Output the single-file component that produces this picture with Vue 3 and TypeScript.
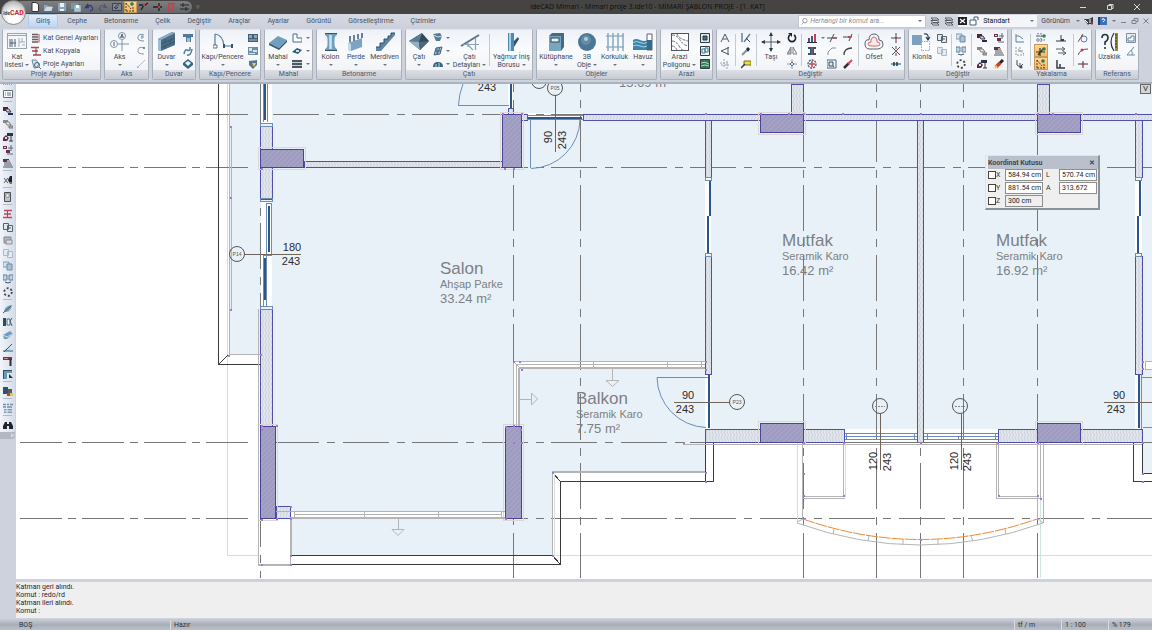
<script setup lang="ts">
import { ref } from 'vue'

type Column = {
  kind: 'big' | 'small' | 'drops' | 'sep' | 'list'
  w: number
  icon?: string
  label?: string[]
  drop?: boolean
  items?: string[]
  texts?: string[]
}
type Group = { title: string; cols: Column[] }

const big = (w: number, icon: string, label: string[], drop = true): Column => ({ kind: 'big', w, icon, label, drop })
const small = (w: number, ...items: string[]): Column => ({ kind: 'small', w, items })
const sep = (w = 4): Column => ({ kind: 'sep', w })
const drops = (w: number, n = 3): Column => ({ kind: 'drops', w, items: Array(n).fill('v') })

const dark = '#2c3c4c'

/* Large glyphs use a 20x20 box. */
const bigIcons: Record<string, string> = {
  floors: `<rect x=".5" y="1.5" width="19" height="15" fill="#f4f6f8" stroke="#9aa4ae"/><path d="M.5 3.5h19" stroke="#9aa4ae"/><path d="M3 7v8M5 7v8M8 7v8M3 11h6" stroke="#4f6376" fill="none"/><path d="M12 6v9M12 10h6M15 6v4M15 13h3" stroke="#9dabb7" fill="none"/>`,
  axes: `<g fill="none" stroke="#7e97ab"><circle cx="12" cy="4" r="3.5"/><circle cx="4" cy="12" r="3.5"/><path d="M12 8v11M8 12h11"/></g><path d="M10.5 6l1.5-4 1.5 4M11 5h2M4 10v4" fill="none" stroke="${dark}" stroke-width=".8"/>`,
  wall: `<path d="M1 7L15 0l3 1v12L4 19l-3-1z" fill="#4c6c84"/><path d="M1 7l3 1v11l-3-1z" fill="#9dbdd1"/><path d="M1 7L15 0l3 1L4 8z" fill="#89adc4"/><path d="M4 12l14-6M4 15.500l14-6M8 7v4M13 8v4M8 13v4" stroke="#34536b" stroke-width=".8"/>`,
  door: `<path d="M2 15V2M2 2q8 1 9 12" fill="none" stroke="#5a7c96" stroke-width="1.2"/><path d="M0 13h4v3H0z" fill="#fff" stroke="#37566e" stroke-width=".8"/><path d="M10 12h2v4h-2zM18 12h2v4h-2z" fill="#37566e"/><path d="M12 14h6" stroke="#9db8ca" stroke-width="2"/>`,
  slab: `<path d="M1 11L10 4l9 4-8 8z" fill="#6f9fbe"/><path d="M1 11l10 5v2L1 13zM11 16l8-8v2l-8 8z" fill="#33597a"/>`,
  column: `<path d="M4 1h12v2q-2.500 1-2.500 4v5q0 4 2.500 5v2H4v-2q2.500-1 2.500-5V7Q6.500 4 4 3z" fill="#6f9fba"/><path d="M9.500 3v14" stroke="#cbe6f2" stroke-width="2.500"/><path d="M4 1.500h12M4 18.500h12" stroke="#33536b" stroke-width="1.2"/>`,
  curtain: `<path d="M2 11l14-5v9L5 19l-3-1z" fill="#7ba4c3"/><path d="M2 11l3 1v7l-3-1z" fill="#c3dbea"/><path d="M4 10V4M8 9V3M12 7V2M16 6V1" stroke="#3c5b77" stroke-width="1.5"/>`,
  stairs: `<path d="M1 19v-4h4v-4h4V7h4V4h3V1h4v2L6 19z" fill="#5f86a2"/><path d="M1 15h4v-4h4V7h4V4h3V1h4" stroke="#294d68" fill="none"/>`,
  roof: `<path d="M0 9L13 1l7 8-9 9z" fill="#33495a"/><path d="M0 9l13-8-3 9z" fill="#5e7c91"/><path d="M0 9l10 1 1 8z" fill="#93b0c2"/><path d="M10 10l10-1-9 9z" fill="#4b687c"/>`,
  truss: `<path d="M1 14L19 3" stroke="#56748a" stroke-width="2" fill="none"/><path d="M3 12.500h16M8 10v5M15.500 6v12M8 13l5 5" fill="none" stroke="#8aa2b4" stroke-width="1.2"/>`,
  gutter: `<path d="M6 1h6v18H6z" fill="#4e8ab0"/><path d="M8 1v18" stroke="#a8d0e8" stroke-width="2"/><path d="M12 9l4-4 1 2-5 8" fill="#2f536e"/>`,
  library: `<path d="M3 4l3-3h12v14l-3 4H3z" fill="#446b85"/><rect x="3" y="4" width="12" height="15" fill="#7ba5bf"/><rect x="5" y="6" width="8" height="4" fill="#e7f4fa" stroke="#27485e"/>`,
  sphere: `<circle cx="10" cy="10" r="9" fill="#4a7797"/><circle cx="9" cy="8" r="5" fill="#668ba7"/><circle cx="9" cy="7" r="2" fill="#b2cddc"/>`,
  railing: `<path d="M1 4h18M1 15h18" stroke="#6f93ad"/><path d="M3 1v18M8 1v18M13 1v18M18 1v18" stroke="#88a9bf" stroke-width="1.5"/>`,
  pool: `<path d="M0 8q3-2 7 0t8 0v10H0z" fill="#3c84aa"/><path d="M14 2h5v16h-5z" fill="#fff" stroke="#59656e"/><path d="M14 8h5v10h-5z" fill="#2f6c90"/><path d="M0 10.500q3-2 7 0t7 0M0 14q3-2 7 0t7 0" stroke="#a8d5e8" fill="none"/>`,
  terrain: `<rect x="1.5" y="1.5" width="17" height="17" fill="#fff" stroke="#4b555e"/><path d="M2 3q5 0 8 5t8 6M7 2q2 5 11 7M2 9q4 0 7 5t6 4M2 14q3 0 5 4" fill="none" stroke="#69757e" stroke-dasharray="3 1"/>`,
  move: `<path d="M10 1v18M1 10h18" stroke="#4b5966"/><path d="M8 4l2-4 2 4zM8 16l2 4 2-4zM4 8l-4 2 4 2zM16 8l4 2-4 2z" fill="#2d3b47"/>`,
  offset: `<path d="M6 17q-5 0-5-5t4-4q0-6 5-6t5 6q4 0 4 4t-5 5z" fill="none" stroke="#58636e"/><path d="M7 14q-3 0-3-2t3-2V8q1-3 3-3t3 3v2q3 0 3 2t-3 2z" fill="#fae8e8" stroke="#cd6d70"/>`,
  clone: `<rect x="0" y="3" width="10" height="10" fill="#7ba0c0"/><path d="M9.500 9.500h8v9h-8z" fill="#fff" stroke="#9ba6b1" stroke-dasharray="1.5 1"/><path d="M12 2q5-1 4 5M14 5l2 3 2-3" fill="none" stroke="#263c56" stroke-width="1.2"/>`,
  distance: `<path d="M2 6q0-3.500 3-3.500t3 3-3 4.500v3M5 15v2" stroke="#26323e" stroke-width="1.600" fill="none"/><path d="M14 1q-6 9 0 18" stroke="#26323e" stroke-width="1.2" fill="none"/><path d="M15 1h3v18h-3z" fill="#938c32"/><path d="M15 3h2M15 6h2M15 9h2M15 12h2M15 15h2" stroke="#3b3b1e"/>`
}

/* Small glyphs use a 10x10 box. */
const icons: Record<string, string> = {
  levels: `<path d="M1 1.5h6M1 4h6M1 6.5h6M1 9h6" stroke="#6a5a62" stroke-width="1.4"/><path d="M8 1v8.500" stroke="#b04850"/>`,
  floorcopy: `<path d="M0 1.5h8M2 9h8M1 5h6" stroke="#b2424c" fill="none" stroke-width="1.3"/><path d="M5 2v7" stroke="#6f4550"/>`,
  settings: `<path d="M1 1h4l3 4-3 4H3z" fill="#dbe6ee" stroke="#6f8aa0"/><circle cx="6" cy="6" r="2.5" fill="none" stroke="#406781"/><path d="M8 8l2 2" stroke="#4e6d82"/>`,
  arc1: `<path d="M8 2Q3 0 2 4t6 4M5 4h3M6 2v4" stroke="#7e93a4" fill="none"/>`,
  arc2: `<path d="M8 2Q3 0 2 4t6 4" stroke="#8296a6" fill="none"/><circle cx="8" cy="2" r="1" fill="#556b7d"/>`,
  dots: `<path d="M1 9l8-8" stroke="#9ba6b0" stroke-dasharray="2 1"/><circle cx="2" cy="8" r="1" fill="#b1bac2"/>`,
  niche: `<path d="M0 1h10v3H8v5H3V4H0z" fill="#4d7c9c"/><path d="M4 5h3v4H4z" fill="#a4bccb"/>`,
  curve: `<path d="M1 8q1-5 3-4t3 0V1M4 9q4 1 5-6" fill="none" stroke="#5a7f9b" stroke-width="1.5"/>`,
  diamond: `<path d="M5 0l5 4v2L5 10 0 6V4z" fill="#376681"/><path d="M5 2l3 2-3 3-3-3z" fill="#e4f3fb"/>`,
  window: `<path d="M0 1h10v8H0z" fill="#435f76"/><path d="M1 2h3v3H1zM6 2h3v3H6z" fill="#89a9bd"/><path d="M1 7h8" stroke="#b0c6d3"/>`,
  window2: `<path d="M0 1h10v8H0z" fill="#6d8ea5"/><path d="M1 2h3v3H1zM5 4h4v2H5zM1 7h6v1H1z" fill="#d5e3ec"/>`,
  shield: `<path d="M1 2l8-1v5L5 10 1 6z" fill="#547790"/><path d="M4 4h4L6 8z" fill="#edcd59"/>`,
  poly: `<path d="M1 1h4v4h5v4H1z" fill="#f9fbfc" stroke="#536f84"/>`,
  slabS: `<path d="M0 6l5-4 5 2-4 4z" fill="#345b76"/><path d="M4 4h3v2H4z" fill="#c6dfed"/>`,
  rows: `<path d="M0 1h10v8H0z" fill="#4c5962"/><path d="M0 3.5h10M0 6.5h10" stroke="#c9d0d5"/>`,
  roofS: `<path d="M0 1l7-1 2 3-2 5H3z" fill="#537993"/><path d="M0 2l5 2 4-1" stroke="#d0e0ea" fill="none"/>`,
  roofMesh: `<path d="M1 9l2-7 6-1-2 7zM2 5h6M4 2v7M7 1L4 9" fill="#a8c1d0" stroke="#42647c"/>`,
  dome: `<path d="M0 8q0-5 5-5t5 5z" fill="#3a647f"/><path d="M3 8V5M6 8V4" stroke="#b8d4e4"/>`,
  siteA: `<path d="M.5.5h9v9h-9z" fill="#dfe9ec" stroke="#2f3d42"/><path d="M3 3h4v4H3z" fill="#426a7d" stroke="#2a3d46"/>`,
  siteB: `<path d="M.5.5h9v9h-9z" fill="#eef4f6" stroke="#2f3d42"/><path d="M2 3h3v4H2zM5 2h3v4H5z" fill="none" stroke="#3e7d8a"/>`,
  siteC: `<path d="M.5.5h9v9h-9z" fill="#347a58" stroke="#2f3d42"/><path d="M1 4q4-2 8 1M1 7q4-2 8 0" stroke="#b2debd" fill="none"/>`,
  caret: `<path d="M1 9l4-8 4 8M3 6h4" stroke="#4c5a67" fill="none"/>`,
  tri: `<path d="M8 1v8M9 1.5L1 5l8 3.500" stroke="#4c5863" fill="none"/>`,
  cross: `<path d="M0 4h8M4 0v9M1 6h9M7 2v8" stroke="#97a5b2" fill="none" stroke-dasharray="2 1"/>`,
  split: `<path d="M1 0v9M3 9l6-8" stroke="#6285a0" stroke-width="1.5"/><path d="M5 5l4 4" stroke="#2c3e4c"/>`,
  dropper: `<path d="M1 9l5-5" stroke="#83939f" stroke-width="2"/><path d="M5 3l2-2 2 2-2 3z" fill="#22303c"/>`,
  tag: `<path d="M3 2h7v4H3z" fill="#eae22a" stroke="#777021"/><path d="M0 9l4-4" stroke="#2a3640" stroke-width="1.5"/>`,
  rotate: `<path d="M7 2A3.600 3.600 0 1 1 3 2" fill="none" stroke="#1e252b" stroke-width="1.600"/><path d="M1 0h4v4z" fill="#1e252b"/>`,
  mirror: `<path d="M4 1v7H0z" fill="#c9b1b3" stroke="#788089"/><path d="M6 1v7h4z" fill="#f1f1f1" stroke="#788089"/>`,
  plus: `<path d="M5 0v10M0 5h10" stroke="#8298ab"/><path d="M5 3l2 2-2 2-2-2z" fill="#dce4eb" stroke="#60788c"/>`,
  bars: `<path d="M1 9V5h2v4zM4 9V3h2v6z" fill="#44558a"/><path d="M7 9V1h2v8z" fill="#c5404a"/><path d="M0 9.5h10" stroke="#282f3c"/>`,
  align: `<path d="M1 1h8v2H1zM1 7h8v2H1zM3 3h4v4H3z" fill="#2a5670"/><path d="M5 1v8" stroke="#d04a54" stroke-width="1"/>`,
  target: `<circle cx="5" cy="5" r="4" fill="none" stroke="#425d78" stroke-width="1.300" stroke-dasharray="2 1"/><path d="M5 2v6M2 5h6" stroke="#d2444e" stroke-width="1.5"/>`,
  trim: `<path d="M0 5h10M3 9l4-8" stroke="#404954"/><path d="M6 5h4" stroke="#bc4852" stroke-width="1.5"/>`,
  extend: `<path d="M0 4h9M9 1L6 8" stroke="#404954"/><path d="M5 4h3" stroke="#bc4852" stroke-width="2"/>`,
  fillet: `<path d="M1 9V6l4-4h4" fill="none" stroke="#848f98"/>`,
  fillet2: `<path d="M1 9q0-7 8-7" fill="none" stroke="#3d464e" stroke-width="1.3"/>`,
  scale: `<path d="M0 1h9v8H0zM3 4l4 4" fill="none" stroke="#486480"/><path d="M2 3h4v4H2z" fill="#dde8f0" stroke="#344f66"/>`,
  brush: `<path d="M1 9l5-5" stroke="#3d2c34" stroke-width="2.5"/><path d="M5 5l4-4" stroke="#ca4c58" stroke-width="2"/>`,
  snapX: `<path d="M0 5h10M5 0v10" stroke="#3f4852"/><path d="M4 4h2v2H4z" fill="#c13c48"/>`,
  explode: `<path d="M1 1l3 3M1 9l3-3M9 1L6 4M9 9L6 6M5 0v3M5 7v3" stroke="#454e58" fill="none"/><circle cx="5" cy="5" r="1.200" fill="#be3b45"/>`,
  join: `<path d="M0 5h10" stroke="#4a8fa6" stroke-width="1.5"/><path d="M3 3v4M6 3v4" stroke="#263943" stroke-width="1.5"/>`,
  copy: `<path d="M.5 1.500h5v6h-5zM4.500 3.500h5v6h-5z" fill="#e2eaf0" stroke="#56626d"/><path d="M6 6h2" stroke="#56626d"/>`,
  copyOff: `<path d="M.5 1.500h5v6h-5zM4.500 3.500h5v6h-5z" fill="#e3ebf1" stroke="#a9bac9"/>`,
  group: `<path d="M0 1h6v5H0z" fill="#d4e1ec" stroke="#7e9bb4"/><path d="M4 3h5v6H4z" fill="#a9c1d5" stroke="#6f8ca6"/>`,
  group2: `<path d="M0 1h4v5H0zM6 1h4v5H6z" fill="#c1d4e4" stroke="#627f9c"/><path d="M2 8q3 2 6 0" stroke="#3d5a76" fill="none"/>`,
  ring: `<circle cx="5" cy="5" r="3.800" fill="none" stroke="#3c4248" stroke-width="1.800" stroke-dasharray="2 2"/>`,
  stackA: `<path d="M0 1h5v4H0z" fill="#4e2433"/><path d="M2 3h4l2 3H4z" fill="#d9ced6" stroke="#3c3242"/><path d="M5 7h5v2H5z" fill="#232c54"/>`,
  stackB: `<path d="M0 1h5v3H0z" fill="#8b8b8b"/><path d="M2 3h4l2 3H4z" fill="#eee" stroke="#777"/><path d="M6 7h4v2H6z" fill="#b5b9bd" stroke="#777"/>`,
  stackC: `<path d="M4 1h6v3H4z" fill="#2b3448"/><path d="M0 6l3-3 3 3-2 3H0z" fill="#5a3041"/><path d="M2 5h2v2H2z" fill="#e5dde2"/><path d="M8 3v6M6 9h4" stroke="#2e3644"/>`,
  stackD: `<path d="M0 1h4v3H0zM3 5h4v3H3z" fill="#693344"/><path d="M1 2h2v1H1z" fill="#e5dde2"/><path d="M8 0v6M5 3h5" stroke="#4d6f86"/><path d="M4 9h6" stroke="#4d6f86"/>`,
  stackE: `<path d="M0 1h6v3H0z" fill="#4d3b60"/><path d="M1 5h7M1 7h8M0 9h10" stroke="#4c5566"/><path d="M4 2h3v2H4z" fill="#c9a27a"/>`,
  eraser: `<path d="M2 8l4-4" stroke="#cd3a2e" stroke-width="3.500"/><path d="M6 4l3-3" stroke="#232323" stroke-width="3"/><path d="M1 9l2-2" stroke="#efd03c" stroke-width="2.500"/>`,
  ucs: `<path d="M1 1v8h8M1 3h3l4 3" stroke="#5d7f9c" fill="none"/>`,
  ucs2: `<path d="M1 1v8h8M3 3l6 5M5 1v6M3 5h5" stroke="#8a9aa9" fill="none" stroke-dasharray="2 1"/>`,
  hook: `<path d="M2 1v5l3 2 3-3M5 8V4" stroke="#414c58" fill="none"/><circle cx="6" cy="8" r="1.5" fill="#414c58"/>`,
  grid: `<path d="M2 0v10M5 0v10M0 3h9M0 7h9" stroke="#55616c" stroke-dasharray="1.5 1"/><circle cx="8" cy="3" r="1.800" fill="#2e865c"/>`,
  'snap*': `<path d="M0 6h9M4 2v8M2 9l5-6" stroke="#263a34" stroke-width="1.2"/><circle cx="8" cy="3" r="1.800" fill="#2a7e4e"/>`,
  'snapg*': `<path d="M1 1v8M8 5v4M1 1l5 6M1 9h8" stroke="#4a4432" stroke-dasharray="2 1"/><circle cx="7" cy="2" r="1.800" fill="#2a7e4e"/>`,
  perp: `<path d="M0 8h10M5 2v6" stroke="#333d47"/><path d="M5 6h3v2H5z" fill="#333d47"/>`,
  para: `<path d="M0 3h8M2 7h8M6 1l3 2-3 2M7 5l3 2-3 2" stroke="#56616c" fill="none"/>`,
  corner: `<path d="M1 1v8h8M4 5v4" stroke="#333d47" fill="none" stroke-width="1.5"/>`,
  tangent: `<circle cx="6" cy="6" r="3" fill="none" stroke="#597c9a"/><path d="M0 9l5-8" stroke="#56616c"/><circle cx="4" cy="3" r="1" fill="#d13b3b"/>`,
  near: `<path d="M0 9q2-6 10-6" stroke="#454f59" fill="none"/><circle cx="4" cy="4" r="1.5" fill="#d13b3b"/>`,
  inter: `<path d="M0 5h10M5 2v7" stroke="#333d47"/><circle cx="5" cy="5" r="1.300" fill="#d13b3b"/>`,
  area: `<path d="M.5.5h9v9h-9z" fill="#e7eef5" stroke="#7990a6"/><path d="M2 8h6V3H5v2H2z" fill="#fff" stroke="#6b849b"/>`,
  angle: `<path d="M9 9H1l7-8M5 4q2 2 1 5" stroke="#6f8ba6" fill="none"/>`,
  list: `<path d="M.5 1.5h9v7h-9z" fill="#fff" stroke="#66707a"/><path d="M2 4h1M4 4h4M2 6h1M4 6h4" stroke="#66707a"/>`,
  fence: `<path d="M1 3l4 5M5 3L1 8" stroke="#555d64"/><path d="M7 1h2v8H7L5 5z" fill="#1f2225"/><path d="M6 8h3" stroke="#e3c84b"/>`,
  calc: `<path d="M1.5.5h6v9h-6z" fill="#bfc4c9" stroke="#4a4e53"/><path d="M3 2h3v3H3z" fill="#fff" stroke="#4a4e53" stroke-width=".5"/>`,
  redz: `<path d="M1 1.5h8M1 5h7M0 8.5h9" stroke="#c04b55" fill="none" stroke-width="1.3"/><path d="M4.500 2v6" stroke="#7c5a63"/>`,
  db: `<path d="M1 2h7v6H1z" fill="#b5b8bb" stroke="#85888c"/><path d="M3 5h6v4H3z" fill="#d9dbdd" stroke="#8b8e92"/>`,
  leaf: `<path d="M1 8q0-6 8-7-1 8-8 7z" fill="#7fa3b8"/><path d="M0 9l8-7" stroke="#395c72"/>`,
  panel: `<path d="M0 1h3v8H0z" fill="#2b4d69"/><path d="M4 2h3v6H4z" fill="#f4f6f8" stroke="#516a80"/><path d="M9 1L7 4l2 5" stroke="#41586c" fill="none"/>`,
  block: `<path d="M0 5l7-4 3 3-6 5H1z" fill="#6d9dbd"/><path d="M0 5l4 2 6-3" stroke="#c9e2f0" fill="none"/>`,
  slash: `<path d="M3 5h5v3H1z" fill="#c5dcea"/><path d="M0 8h10M1 9l8-8" stroke="#3c5b70"/>`,
  hammer: `<path d="M0 1h9v3H0z" fill="#6d3a44"/><path d="M7.500 3v7" stroke="#2d2d33" stroke-width="2"/><path d="M1 2h4v1H1z" fill="#c9888f"/>`,
  lshape: `<path d="M0 1h9v3H4v6H0z" fill="#6d97b2"/><path d="M0 1h9v1H1v8H0z" fill="#2f536b"/><path d="M6 5l4 4H6z" fill="#22343f"/>`,
  cubes: `<path d="M0 1h5v7H0z" fill="#2f536b"/><path d="M5 3h4v4H5z" fill="#565b60"/><path d="M4 7h3v3H4z" fill="#ce3d32"/><path d="M7 7h3v3H7z" fill="#e5c43b"/>`,
  auto: `<path d="M0 1.5h3M4 1.5h2M7 1.5h3M0 4h3M4 4h5" stroke="#6c93ad" stroke-width="1.5"/><path d="M1 6h8v4H1z" fill="#7a9bb0"/><path d="M1 8h8M4 6v4" stroke="#e7f0f5"/>`,
  binoc: `<path d="M0 9V6l2-4h2v7zM10 9V6L8 2H6v7z" fill="#1f252b"/><path d="M4 4h2v2H4z" fill="#1f252b"/>`,
  newf: `<path d="M2 .5h4l2.500 2v7H2z" fill="#fff" stroke="#333"/>`,
  open: `<path d="M1 9V3h3l1 1h4v5z" fill="#8ea6b8"/><path d="M1 9l2-4h7L8 9z" fill="#c9dbe6"/>`,
  save: `<path d="M1 1h8v8H1z" fill="#86a6bd"/><path d="M3 1h4v4H3zM3 7h4v2H3z" fill="#e8f1f6"/>`,
  saveAll: `<path d="M0 1h7v6H0z" fill="#7797ae"/><path d="M3 3h7v7H3z" fill="#a9c4d5" stroke="#577891" stroke-width=".5"/><path d="M5 3h3v3H5z" fill="#fff"/>`,
  undo: `<path d="M2 5q4-3 6 0t-2 4M4 2L1.500 5.500H5" fill="none" stroke="#2c3a8a" stroke-width="1.300"/>`,
  redo: `<path d="M8 5Q4 2 2 5t2 4M6 2l2.500 3.500H5" fill="none" stroke="#4a5482" stroke-width="1.100"/>`,
  plot: `<path d="M.5 1.500h9v7h-9z" fill="#7d868e" stroke="#3d474f"/><path d="M7 3Q3 3 4 6M2 5l2 2 2-2" stroke="#2f3a5c" fill="none"/>`,
  ortho: `<path d="M0 3h6l3-2M5 3L2 8" stroke="#1f2226" stroke-width="1.3" fill="none"/><path d="M4 2h2v2H4z" fill="#ca3a3e"/>`,
  nearD: `<path d="M0 5h9M6 1v8" stroke="#1f2226" stroke-width="1.3"/><path d="M5 4h2v2H5z" fill="#ca3a3e"/>`,
  redp: `<path d="M3 9V1.500h6M7 9V1.500M1 7l2 2 2-2" stroke="#d13a3c" fill="none" stroke-width="1.300"/>`,
  two: `<path d="M0 3h9M0 7h9" stroke="#22262a" stroke-width="1.2"/><path d="M3 1v4M6 5v4" stroke="#22262a"/>`,
  layers: `<path d="M1 2h6l2 2H3zM1 4.500h6l2 2H3zM1 7h6l2 2H3z" fill="#eceff2" stroke="#3d434a" stroke-width=".8"/>`,
  boxx: `<path d="M0 1h9v8H0z" fill="#1e2226"/><path d="M2 3l5 4M7 3L2 7" stroke="#fff" stroke-width="1.3"/>`,
  lock: `<path d="M1 4h6v5H1z" fill="#fff" stroke="#43607c"/><path d="M5 4V1h4v3" fill="none" stroke="#43607c"/>`,
  book: `<path d="M1 1h8v8H1z" fill="#3c70b8"/><path d="M1 1v8" stroke="#1e4177" stroke-width="2"/><path d="M4 4q0-2 2-1t-1 3" stroke="#fff" fill="none"/>`,
  paint: `<path d="M0 3h5l4-2v7H5L4 9z" fill="#3a3d42"/><path d="M1 4l3 3M6 3v4" stroke="#fff"/><path d="M8 6v3" stroke="#c43a3a"/>`
}

const groups: Group[] = [
  {
    title: 'Proje Ayarları',
    cols: [
      big(28, 'floors', ['Kat', 'listesi']),
      { kind: 'list', w: 69, items: ['levels', 'floorcopy', 'settings'], texts: ['Kat Genel Ayarları', 'Kat Kopyala', 'Proje Ayarları'] }
    ]
  },
  { title: 'Aks', cols: [big(29, 'axes', ['Aks']), small(14, 'arc1', 'arc2', 'dots')] },
  { title: 'Duvar', cols: [big(27, 'wall', ['Duvar']), small(15, 'niche', 'curve', 'diamond')] },
  { title: 'Kapı/Pencere', cols: [big(45, 'door', ['Kapı/Pencere']), small(15, 'window', 'window2', 'shield')] },
  { title: 'Mahal', cols: [big(26, 'slab', ['Mahal']), small(12, 'poly', 'slabS', 'rows'), drops(9)] },
  { title: 'Betonarme', cols: [big(27, 'column', ['Kolon']), big(24, 'curtain', ['Perde']), big(33, 'stairs', ['Merdiven'])] },
  {
    title: 'Çatı',
    cols: [big(26, 'roof', ['Çatı']), small(12, 'roofS', 'roofMesh', 'dome'), drops(8), big(35, 'truss', ['Çatı', 'Detayları']), sep(), big(41, 'gutter', ['Yağmur İniş', 'Borusu'])]
  },
  {
    title: 'Objeler',
    cols: [big(38, 'library', ['Kütüphane']), big(24, 'sphere', ['3B', 'Obje']), big(31, 'railing', ['Korkuluk']), big(26, 'pool', ['Havuz'])]
  },
  { title: 'Arazi', cols: [big(37, 'terrain', ['Arazi', 'Poligonu']), small(14, 'siteA', 'siteB', 'siteC')] },
  {
    title: 'Değiştir',
    cols: [
      small(16, 'caret', 'tri', 'cross'), sep(), small(17, 'split', 'dropper', 'tag'), sep(),
      big(26, 'move', ['Taşı'], false), small(15, 'rotate', 'mirror', 'plus'), sep(),
      small(17, 'bars', 'align', 'target'), drops(5, 1), small(14, 'trim', 'fillet', 'scale'), small(17, 'extend', 'fillet2', 'brush'), sep(),
      big(28, 'offset', ['Ofset'], false), small(16, 'snapX', 'explode', 'join')
    ]
  },
  {
    title: 'Değiştir',
    cols: [
      big(26, 'clone', ['Klonla'], false), small(14, 'copy', 'copyOff'), sep(), small(16, 'group', 'group2', 'ring'), sep(),
      small(18, 'stackA', 'stackB', 'stackC'), small(16, 'stackD', 'stackE', 'eraser')
    ]
  },
  {
    title: 'Yakalama',
    cols: [small(16, 'ucs', 'ucs2', 'hook'), sep(), small(18, 'grid', 'snap*', 'snapg*'), small(21, 'perp', 'para', 'corner'), sep(), small(16, 'tangent', 'near', 'inter')]
  },
  { title: 'Referans', cols: [big(27, 'distance', ['Uzaklık'], false), small(15, 'area', 'angle')] }
]

const tabs = ['Giriş', 'Cephe', 'Betonarme', 'Çelik', 'Değiştir', 'Araçlar', 'Ayarlar', 'Görüntü', 'Görselleştirme', 'Çizimler']
const activeTab = ref('Giriş')
const quick = ['newf', 'open', 'save', 'saveAll', 'undo', 'redo', 'plot', 'snapg*', 'ortho', 'nearD', 'redp', 'two']
const tools: string[][] = [
  ['list'],
  ['stackA', 'stackB', 'stackC', 'stackD', 'stackE'],
  ['fence'],
  ['calc'],
  ['redz', 'copy', 'db', 'copyOff', 'group', 'group2', 'ring'],
  ['leaf', 'panel', 'block', 'slash', 'hammer', 'lshape'],
  ['cubes'],
  ['auto'],
  ['binoc']
]
const log = ['Katman geri alındı.', 'Komut : redo/rd', 'Katman ileri alındı.', 'Komut :']

const rooms = [
  { x: 440, y: 274, name: 'Salon', floor: 'Ahşap Parke', area: '33.24 m²' },
  { x: 782, y: 246, name: 'Mutfak', floor: 'Seramik Karo', area: '16.42 m²' },
  { x: 996, y: 246, name: 'Mutfak', floor: 'Seramik Karo', area: '16.92 m²' },
  { x: 576, y: 404, name: 'Balkon', floor: 'Seramik Karo', area: '7.75 m²' }
]
/* [x, y, width, height] */
const walls = [
  [260, 126, 12, 23], [260, 167, 12, 32], [260, 309, 12, 117], [304, 161, 198, 6], [521, 114, 6, 6], [508, 108, 5, 6],
  [583, 114, 569, 6], [705, 120, 6, 57], [705, 256, 6, 118], [791, 84, 12, 30], [1037, 84, 12, 30], [917, 120, 6, 322],
  [1135, 120, 7, 57], [1135, 256, 7, 118], [705, 429, 55, 13], [803, 429, 41, 13], [998, 429, 39, 13], [1080, 429, 62, 13], [276, 506, 14, 12]
]
const pillars = [
  [260, 149, 43, 18], [502, 114, 19, 53], [760, 114, 43, 18], [1037, 114, 43, 18],
  [260, 426, 15, 92], [505, 426, 16, 92], [760, 423, 43, 19], [1037, 423, 43, 19]
]
const nodes = [
  [230, 126], [230, 197], [230, 309], [228, 355], [260, 354], [261, 168], [502, 113], [521, 113], [504, 168], [513, 168],
  [705, 113], [760, 113], [788, 113], [803, 113], [842, 113], [920, 113], [1037, 113], [1052, 113], [1135, 113],
  [513, 361], [519, 361], [521, 369], [705, 361], [705, 369], [261, 425], [261, 429], [276, 425], [505, 426], [513, 425], [520, 429], [513, 442], [521, 442],
  [290, 506], [290, 518], [276, 518], [261, 519], [290, 555], [290, 564], [261, 564], [505, 518], [552, 472], [552, 555], [683, 442], [705, 472], [705, 481],
  [803, 442], [803, 473], [803, 495], [843, 442], [843, 495], [803, 518], [920, 539], [920, 442], [997, 442], [998, 495], [1037, 495], [1040, 498], [1037, 518], [1037, 442],
  [1142, 361], [1142, 368], [1142, 442], [1142, 473], [1142, 481]
]
const columnsX = [513.5, 580.5, 803.5, 876.5, 920.5, 963.5, 1037.5]
const rowsY = [114.5, 167.5, 442.5, 518.5]
const tags = [
  { x: 237, y: 254, t: 'P14' }, { x: 555, y: 88, t: 'P05' }, { x: 539, y: 81, t: '' }, { x: 737, y: 402, t: 'P23' },
  { x: 880, y: 406, t: '' }, { x: 960, y: 406, t: '' }
]
const dims = [
  { x: 487, y: 91, t: '243', r: 0 }, { x: 292, y: 251, t: '180', r: 0 }, { x: 291, y: 265, t: '243', r: 0 },
  { x: 688, y: 399, t: '90', r: 0 }, { x: 685, y: 413, t: '243', r: 0 }, { x: 1119, y: 399, t: '90', r: 0 }, { x: 1116, y: 413, t: '243', r: 0 },
  { x: 552, y: 137, t: '90', r: -90 }, { x: 566, y: 140, t: '243', r: -90 },
  { x: 877, y: 461, t: '120', r: -90 }, { x: 891, y: 462, t: '243', r: -90 }, { x: 958, y: 461, t: '120', r: -90 }, { x: 971, y: 462, t: '243', r: -90 }
]
const coords = ref([
  { key: 'X', value: '584.94 cm', key2: 'L', value2: '570.74 cm', on: false },
  { key: 'Y', value: '881.54 cm', key2: 'A', value2: '313.672', on: false },
  { key: 'Z', value: '300 cm', key2: '', value2: '', on: false }
])
</script>

<template>
  <div class="app">
    <header class="titlebar">
      <button class="orb" aria-label="ideCAD"><span class="orb-a">ide</span><span class="orb-b">CAD</span></button>
      <div class="quick">
        <button v-for="q in quick" :key="q" class="q" :class="{ lit: q.endsWith('*') }" :aria-label="q">
          <svg class="ic" viewBox="0 0 10 10" v-html="icons[q]"></svg>
        </button>
      </div>
      <span class="more">▿</span>
      <h1 class="title">ideCAD Mimari - Mimari proje 3.ide10 - MİMARİ ŞABLON PROJE - [1. KAT]</h1>
      <div class="winbtns">
        <button aria-label="Küçült"><svg viewBox="0 0 8 8"><path d="M1 4.5h6" /></svg></button>
        <button aria-label="Geri yükle"><svg viewBox="0 0 8 8"><path d="M1.5 2.5h4v4h-4zM3 2.5v-1h4v4h-1" /></svg></button>
        <button aria-label="Kapat"><svg viewBox="0 0 8 8"><path d="M1 1l6 6M7 1L1 7" /></svg></button>
      </div>
    </header>

    <nav class="tabrow">
      <button v-for="t in tabs" :key="t" class="tab" :class="{ on: t === activeTab }" @click="activeTab = t">{{ t }}</button>
      <div class="tabtools">
        <label class="search">
          <svg class="mag" viewBox="0 0 8 8"><circle cx="4.5" cy="3" r="2.5" /><path d="M3 5L.5 7.5" /></svg>
          <input type="text" placeholder="Herhangi bir komut ara..." aria-label="Komut ara" />
          <i class="dd"></i>
        </label>
        <svg class="ic" viewBox="0 0 10 10" v-html="icons.layers"></svg>
        <svg class="ic" viewBox="0 0 10 10" v-html="icons.layers"></svg>
        <div class="layer">
          <svg class="ic" viewBox="0 0 10 10" v-html="icons.boxx"></svg>
          <svg class="ic" viewBox="0 0 10 10" v-html="icons.lock"></svg>
          <select aria-label="Katman"><option>Standart</option></select>
          <i class="dd"></i>
        </div>
        <button class="view">Görünüm<i class="dd"></i></button>
        <svg class="ic" viewBox="0 0 10 10" v-html="icons.paint"></svg>
        <svg class="ic" viewBox="0 0 10 10" v-html="icons.book"></svg>
        <i class="dd"></i>
        <div class="mdi">
          <button aria-label="Pencereyi küçült"><svg viewBox="0 0 8 8"><path d="M1 5.5h5" /></svg></button>
          <button aria-label="Pencereyi geri yükle"><svg viewBox="0 0 8 8"><path d="M1 3.5h4v3H1zM3 3V1.5h4v3H5" /></svg></button>
          <button aria-label="Pencereyi kapat"><svg viewBox="0 0 8 8"><path d="M1.5 1.5l5 5M6.5 1.5l-5 5" /></svg></button>
        </div>
      </div>
    </nav>

    <section class="ribbon">
      <div v-for="(g, gi) in groups" :key="gi" class="group">
        <div class="cols">
          <div v-for="(c, ci) in g.cols" :key="ci" class="col" :class="c.kind" :style="{ width: c.w + 'px' }">
            <button v-if="c.kind === 'big'" class="bigbtn">
              <svg class="bigic" viewBox="0 0 20 20" v-html="bigIcons[c.icon!]"></svg>
              <span>{{ c.label![0] }}</span>
              <span v-if="c.label![1]">{{ c.label![1] }}<i v-if="c.drop" class="dd"></i></span>
              <i v-else-if="c.drop" class="dd under"></i>
            </button>
            <template v-else-if="c.kind === 'small'">
              <button v-for="n in c.items" :key="n" class="sb" :class="{ lit: n.endsWith('*') }" :aria-label="n">
                <svg class="ic" viewBox="0 0 10 10" v-html="icons[n]"></svg>
              </button>
            </template>
            <template v-else-if="c.kind === 'drops'">
              <span v-for="(n, ni) in c.items" :key="ni" class="sb"><i class="dd"></i></span>
            </template>
            <template v-else-if="c.kind === 'list'">
              <button v-for="(n, ni) in c.items" :key="n" class="lb">
                <svg class="ic" viewBox="0 0 10 10" v-html="icons[n]"></svg>{{ c.texts![ni] }}
              </button>
            </template>
          </div>
        </div>
        <div class="gtitle">{{ g.title }}</div>
      </div>
    </section>

    <main class="body">
      <aside class="side">
        <div class="tools">
          <div class="grip"></div>
          <div v-for="(set, si) in tools" :key="si" class="set">
            <button v-for="n in set" :key="n" class="tool" :aria-label="n">
              <svg class="ic" viewBox="0 0 10 10" v-html="icons[n]"></svg>
            </button>
          </div>
        </div>
        <div class="sideend">▹</div>
      </aside>

      <div class="canvas">
        <svg class="plan" viewBox="16 84 1136 495" preserveAspectRatio="xMidYMid slice">
          <defs>
            <pattern id="brick" width="6" height="6" patternUnits="userSpaceOnUse">
              <rect width="6" height="6" fill="#e3e6eb" />
              <path d="M1 0l1.5 3L1 6M4 0l1.5 3L4 6" fill="none" stroke="#c3cbd8" stroke-width=".8" />
            </pattern>
            <pattern id="conc" width="5" height="5" patternUnits="userSpaceOnUse">
              <rect width="5" height="5" fill="#9f9cc3" />
              <path d="M-1 6L6-1" stroke="#aea9c2" stroke-width="1" />
            </pattern>
          </defs>
          <path class="room" d="M229 84H1152V473H1142V443H705V472H552V555H291V518H260V354H229Z" />

          <g class="crisp">
            <path class="light" d="M227.5 84V555.5H290M552 555.5H1152" />
            <path class="void" d="M261 84h11v39h-11zM261 202h11v105h-11zM508 84h5v24h-5zM527 113h56v5h-56zM705 178h6v77h-6zM1135 178h7v77h-7zM705 374h6v55h-6zM1135 374h5v55h-5zM844 429h73v14h-73zM924 429h74v14h-74z" />
            <path class="void" d="M513 361H705V368H520V426H513zM276 511H505V518H276zM258 519H290V565H258zM1144 361h8v8h-8zM229 355h32v9h-32z" />

            <g class="axis">
              <path v-for="y in rowsY" :key="'l' + y" class="dash-l" :d="`M20 ${y}H250`" />
              <path v-for="y in rowsY" :key="'r' + y" class="dash" :d="`M273 ${y}H1152`" />
              <path v-for="x in columnsX" :key="x" class="dash" :d="`M${x} 46V578`" />
              <path class="dash" d="M260.5 84V578" />
            </g>

            <rect v-for="(w, i) in walls" :key="'w' + i" class="wall" :x="w[0] + 0.5" :y="w[1] + 0.5" :width="w[2]" :height="w[3]" />
            <rect v-for="(p, i) in pillars" :key="'o' + i" class="halo" :x="p[0] - 1.5" :y="p[1] - 1.5" :width="p[2] + 4" :height="p[3] + 4" />
            <rect v-for="(p, i) in pillars" :key="'p' + i" class="pillar" :x="p[0] + 0.5" :y="p[1] + 0.5" :width="p[2]" :height="p[3]" />

            <path class="black" d="M218.5 84V364.5H261M291 564.5H560.5V481.5H713.5V443M705.5 443V481M291 555.5H552M1133.5 443V481.5H1152M1142.5 443V473.5H1152" />
            <path class="black" d="M219 364L228 355M552 472L560 481M552 555L560 564" />
            <path class="grey" d="M229.5 84V354.5H261M231.5 126V309M258.5 309V564.5H290.5V519M291.5 519V555M552.5 472V555" />
            <path class="grey thick" d="M552 472H705M520 368H705M519 368V426M290 518H505M258 565H290" />
            <path class="grey" d="M513.5 426V361.5H705M516.5 426V364.5H705M593.5 361V368M667.5 361V368M701.5 361V368M514 362L520 368M276 511.5H505M294 514.5H502M294.5 511V518M364.5 511V518M438.5 511V518M501.5 511V518M1152 361.5H1145V369.5H1152" />
            <path class="grey" d="M683 444.5H1142M802.5 443V518M801.5 496.5H843.5V443M801.5 498.5H844.5M998.5 443V496.5H1037M996.5 443V498.5H1040M1037.5 443V518M1040.5 443V498M1043.5 443V523" />
            <path class="light" d="M797.5 443V523M845.5 443V497M554.5 474V555" />
            <path class="mint" d="M1040.5 499V578" />

            <path class="blue" d="M260.5 123.5h12v3h-12zM260.5 198.5h12v3h-12zM260.5 306.5h12v3h-12zM263.5 84V122M267.5 84V122M266.5 203.5h5v52h-5zM263.5 255.5h3v51h-3z" />
            <path class="navy" d="M265 84V120M269 206V252M265 258V300M510.5 84V108M709.5 180V216M707.5 216V254M1139.5 180V216M1137.5 216V254M708.5 375V428M1138.5 375V428M528 117.5H582" />
            <path class="blue" d="M705.5 177.5h6v3h-6zM705.5 253.5h6v3h-6zM1135.5 177.5h6v3h-6zM1135.5 253.5h6v3h-6zM527 115.5H583M527 119.5H583M458 105.5H509M530.5 119V168M657 377.5H708M1142 377.5H1152M1141.5 374V429M1143 427.5H1152" />
            <path class="blue" d="M844.5 433.5H917M844.5 436.5H917M844.5 439.5H917M924 433.5H997.5M924 436.5H997.5M924 439.5H997.5M846.5 433V440M914.5 433V440M927.5 433V440M995.5 433V440M880.5 436V440M958.5 436V440" />
            <path class="grey dk" d="M844 442.5H998" />
            <rect v-for="(n, i) in nodes" :key="'n' + i" class="node" :x="n[0]" :y="n[1]" width="2" height="2" />
            <path class="grey" d="M612.5 369V380M520 399.5H531M398.5 519V529" />
            <path class="brown" d="M244 254.5H301M555.5 95V152M674 402.5H730M1104 402.5H1152M880.5 414V470M961.5 414V470" />
          </g>

          <path class="blue" d="M458.5 105Q459 94 463 84M580 119A50 50 0 0 1 531 168.5M657 377.5A51 51 0 0 0 706 427.5" />
          <path class="grey" d="M606 380.5H619L612.5 386.5ZM531.5 393V405L537.5 399ZM392 529.5H404L398 535.5Z" />
          <path class="grey" d="M797 522L803 519M797 523Q920 567 1043 523L1037 518M834 529l-1 5M869 536l-1 5M903 539v6M938 539v6M971 536l2 5M1005 529l1 5" />
          <path class="orange" d="M803 519Q920 560 1037 519" />

          <g v-for="(t, i) in tags" :key="'t' + i">
            <circle class="tag" :cx="t.x" :cy="t.y" r="7.5" />
            <text class="tagt" :x="t.x" :y="t.y + 2">{{ t.t }}</text>
          </g>
          <path class="tagline" d="M875 406.5H885M955 406.5H965" />

          <text v-for="(d, i) in dims" :key="'d' + i" class="dim" :x="d.x" :y="d.y" :transform="d.r ? `rotate(${d.r} ${d.x} ${d.y})` : undefined">{{ d.t }}</text>

          <g v-for="(r, i) in rooms" :key="'r' + i">
            <text class="rn" :x="r.x" :y="r.y">{{ r.name }}</text>
            <text class="rf" :x="r.x" :y="r.y + 14">{{ r.floor }}</text>
            <text class="ra" :x="r.x" :y="r.y + 29">{{ r.area }}</text>
          </g>
          <text class="ra" x="619" y="87">15.69 m²</text>
        </svg>

        <button class="vbtn">V</button>

        <form class="coord" @submit.prevent>
          <div class="chead"><span>Koordinat Kutusu</span><button type="button" aria-label="Kapat">✕</button></div>
          <div v-for="c in coords" :key="c.key" class="crow">
            <label><input type="checkbox" v-model="c.on" />{{ c.key }}</label>
            <input class="cv" :class="{ off: c.key === 'Z' }" type="text" v-model="c.value" :aria-label="c.key" />
            <span class="k2">{{ c.key2 }}</span>
            <input v-if="c.key2" class="cv" type="text" v-model="c.value2" :aria-label="c.key2" />
          </div>
        </form>
      </div>
    </main>

    <section class="log"><p v-for="(l, i) in log" :key="i">{{ l }}</p></section>

    <footer class="status">
      <span class="s1">BOŞ</span>
      <span class="s2">Hazır</span>
      <span class="s3">tf / m</span>
      <span class="s3">1 : 100</span>
      <span class="s4">% 179</span>
    </footer>
  </div>
</template>

<style>
html, body { margin: 0; }
</style>

<style scoped>
.app {
  height: 100vh;
  display: flex;
  flex-direction: column;
  overflow: hidden;
  background: #cdd2dc;
  font-family: Roboto, "Open Sans", sans-serif;
  font-size: 7px;
  line-height: 8px;
  color: #3c4a5e;
}
button, input, select { font: inherit; color: inherit; border: 0; padding: 0; margin: 0; background: none; }
.ic { width: 10px; height: 10px; flex: none; display: block; }
.dd { display: inline-block; border: 2px solid transparent; border-top-color: #6c7480; border-bottom: 0; flex: none; }

.titlebar { height: 14px; flex: none; display: flex; align-items: center; background: #454443; position: relative; }
.orb {
  position: absolute; left: 1px; top: 0; width: 25px; height: 25px; border-radius: 50%; z-index: 3;
  background: radial-gradient(circle at 50% 70%, #ffffff 0 30%, #d5d5d7 60%, #8f9195 100%);
  border: 1px solid #8b8d90; font-weight: 700; font-size: 7px; white-space: nowrap;
}
.orb-a { color: #4a4a4a; font-size: 5px; }
.orb-b { color: #d8232a; }
.quick {
  margin-left: 20px; padding-left: 8px; width: 164px; height: 12px; display: flex; align-items: center; justify-content: space-around;
  background: linear-gradient(#7d7e80, #66676a); border-radius: 0 6px 6px 0;
}
.q { width: 13px; height: 12px; display: grid; place-items: center; }
.lit { background: linear-gradient(#fbd89a, #f7b85a); box-shadow: inset 0 0 0 1px #c99b57; }
.more { color: #999; margin-left: 4px; }
.title { flex: 1; margin: 0; text-align: center; font-family: "Open Sans", sans-serif; font-size: 7px; font-weight: 400; color: #0e0e0e; padding-left: 16px; }
.winbtns { display: flex; gap: 19px; padding-right: 11px; }
.winbtns button, .mdi button { width: 8px; height: 8px; display: block; }
.winbtns svg, .mdi svg { display: block; width: 8px; height: 8px; fill: none; stroke: #d8d8d8; }
.mdi svg { stroke: #7a828e; }

.tabrow { height: 14px; flex: none; display: flex; align-items: stretch; gap: 1px; padding-left: 28px; background: linear-gradient(#d5dae3, #cbd0da); }
.tab { padding: 0 8px; color: #4a5568; }
.tab.on { background: linear-gradient(#e4eefb, #b8d4f4); border-radius: 2px 2px 0 0; box-shadow: inset 0 0 0 1px #b4c9e2; color: #33527c; }
.tabtools { margin-left: auto; display: flex; align-items: center; gap: 4px; padding-right: 2px; }
.search { display: flex; align-items: center; width: 126px; height: 11px; background: #fff; border: 1px solid #c3c9d2; }
.mag { width: 7px; height: 7px; margin: 0 2px; fill: none; stroke: #8a929c; }
.search input { flex: 1; min-width: 0; font-style: italic; outline: 0; }
.search input::placeholder { color: #8a8f96; }
.search .dd { margin-right: 3px; }
.layer { display: flex; align-items: center; gap: 1px; width: 79px; height: 12px; background: #f4f5f8; }
.layer select { flex: 1; appearance: none; margin-left: 3px; color: #111; }
.layer .dd { margin-right: 3px; }
.view { display: flex; align-items: center; gap: 6px; }
.mdi { display: flex; gap: 3px; }

.ribbon { height: 51px; flex: none; display: flex; gap: 3px; padding: 1px 2px 2px; background: #cdd2dc; border-bottom: 2px solid #aab4bf; }
.group { display: flex; flex-direction: column; border: 1px solid #a9b0ba; border-top-color: #dfe4ea; border-radius: 2px; background: linear-gradient(#eef2f8, #fafbfd 40%, #eef0f3); flex: none; }
.cols { flex: 1; display: flex; align-items: stretch; }
.gtitle { height: 9px; line-height: 9px; text-align: center; background: linear-gradient(#dcdfe5, #c6cad2); color: #4c5870; }
.col { flex: none; display: flex; flex-direction: column; align-items: center; }
.small, .drops { padding-top: 1px; }
.sb { width: 14px; height: 13px; display: grid; place-items: center; }
.drops .sb { width: 5px; }
.sep::after { content: ""; width: 1px; height: 32px; margin-top: 4px; background: #c4cad2; }
.bigbtn { width: 100%; display: flex; flex-direction: column; align-items: center; white-space: nowrap; padding-top: 2px; }
.bigic { width: 20px; height: 20px; display: block; margin-bottom: 1px; }
.bigbtn span { line-height: 8px; height: 8px; display: flex; align-items: center; gap: 2px; }
.under { margin-top: 3px; }
.list { align-items: stretch; padding-top: 1px; }
.lb { height: 13px; display: flex; align-items: center; gap: 2px; white-space: nowrap; text-align: left; }

.body { flex: 1; display: flex; min-height: 0; }
.side { width: 16px; flex: none; }
.tools { background: linear-gradient(90deg, #f1f4fa, #d5dce8); border-radius: 0 0 3px 0; width: 15px; padding-bottom: 1px; }
.grip { height: 2px; margin: 0 3px; border-top: 1px dotted #99a2ae; }
.set { display: flex; flex-direction: column; align-items: center; }
.set + .set::before { content: ""; width: 9px; height: 1px; background: #b2bac6; margin: 1px 0 2px; }
.tool { width: 14px; height: 13px; display: grid; place-items: center; }
.sideend { width: 15px; height: 7px; line-height: 7px; background: #b2b7c0; text-align: right; color: #fff; border-radius: 0 0 3px 0; }

.canvas { flex: 1; min-width: 0; position: relative; background: #fff; overflow: hidden; }
.plan { position: absolute; inset: 0; width: 100%; height: 100%; display: block; }
.crisp { shape-rendering: crispEdges; }
.room { fill: #e9f1f8; }
.void { fill: #fff; }
.axis path { stroke: #777; fill: none; }
.dash { stroke-dasharray: 46 8 8 7.5; }
.dash-l { stroke-dasharray: 42 6 8 6; }
.wall { fill: url(#brick); stroke: #4f50ae; }
.pillar { fill: url(#conc); stroke: #45459f; }
.halo { fill: none; stroke: #dfd5d5; }
.black { stroke: #3a3a3a; fill: none; }
.grey { stroke: #b4b4b4; fill: none; }
.thick { stroke-width: 2; }
.dk { stroke: #777; }
.light { stroke: #dcdcdc; fill: none; }
.mint { stroke: #cfe6e0; }
.blue { stroke: #6b8db8; fill: none; }
.navy { stroke: #2d5688; fill: none; stroke-width: 2; }
.node { fill: #a477d2; }
.brown { stroke: #6e665c; fill: none; }
.orange { stroke: #ec8a34; fill: none; stroke-dasharray: 12 1; }
.tag { fill: none; stroke: #555; }
.tagt { font: 5px "Liberation Sans", sans-serif; text-anchor: middle; fill: #555; }
.tagline { stroke: #888; stroke-dasharray: 2 1; }
.dim { font: 11px "Liberation Sans", sans-serif; fill: #2e2a28; text-anchor: middle; }
.rn, .rf, .ra { font-family: "Liberation Sans", sans-serif; fill: #7d8082; }
.rn { font-size: 17px; }
.rf { font-size: 11px; }
.ra { font-size: 13px; }

.vbtn { position: absolute; right: 1px; top: 0; width: 11px; height: 10px; background: #d5d5d5; border: 1px solid #666; font-size: 8px; line-height: 8px; color: #333; }
.coord { position: absolute; right: 52px; top: 71px; width: 112px; background: #efefef; border: 1px solid #e3e3e3; border-right: 2px solid #8c9099; border-bottom: 2px solid #8c9099; color: #333; }
.chead { display: flex; justify-content: space-between; align-items: center; height: 13px; background: #b9c0cb; padding: 0 3px 0 0; font-weight: 700; color: #3f4854; margin-left: 2px; }
.crow { display: flex; align-items: center; height: 12px; margin-bottom: 1px; padding-left: 2px; }
.crow label { width: 17px; display: flex; align-items: center; }
.crow input[type="checkbox"] { appearance: none; width: 8px; height: 8px; border: 1px solid #444; background: #fff; }
.cv { width: 36px; height: 10px; box-sizing: content-box; border: 1px solid #8d8d8d; background: #fff; text-indent: 2px; color: #222; outline: 0; }
.cv.off { background: #efefef; }
.k2 { width: 13px; margin-left: 3px; }

.log { height: 36px; flex: none; margin: 3px 0 0 16px; background: #efefef; box-sizing: border-box; padding-top: 1px; color: #2a2230; }
.log p { margin: 0; line-height: 8px; }
.status { height: 11px; flex: none; margin-top: 1px; display: flex; align-items: center; padding-left: 16px; background: linear-gradient(#c9ced6, #a9afb9 50%, #b9bec7); color: #333; }
.s1 { width: 151px; padding-left: 3px; }
.s2 { flex: 1; }
.s2, .s3, .s4 { border-left: 1px solid #d9dce2; padding-left: 3px; line-height: 10px; }
.s3 { width: 43px; }
.s4 { width: 40px; }
</style>
